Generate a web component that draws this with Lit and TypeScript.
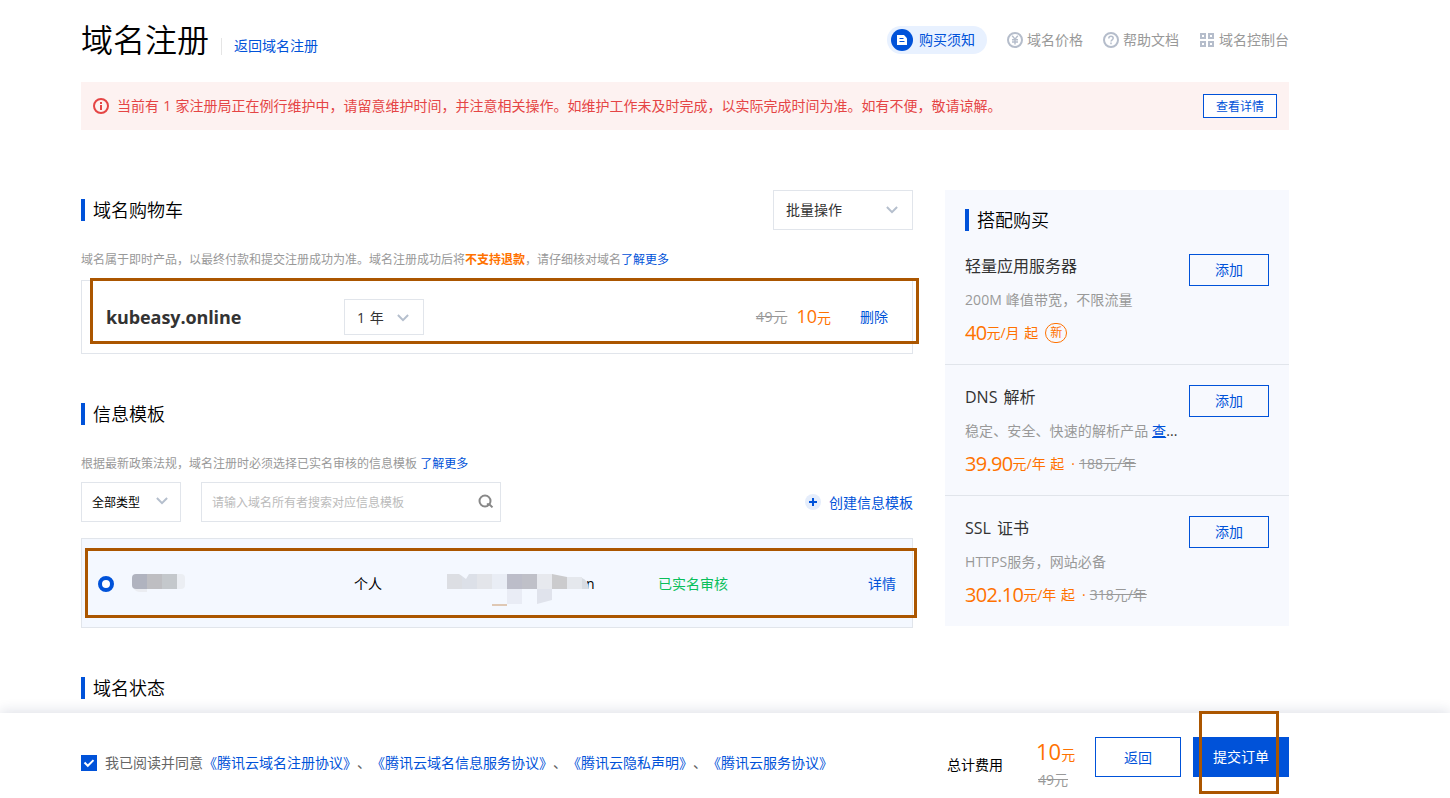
import { LitElement, html, svg, css, nothing } from "lit";
import { customElement } from "lit/decorators.js";

interface Addon {
  name: string;
  desc: string;
  more?: string;
  price: string;
  unit: string;
  badge?: string;
  old?: string;
}

const addons: Addon[] = [
  { name: "轻量应用服务器", desc: "200M 峰值带宽，不限流量", price: "40", unit: "元/月 起", badge: "新" },
  { name: "DNS 解析", desc: "稳定、安全、快速的解析产品", more: "查", price: "39.90", unit: "元/年 起", old: "188元/年" },
  { name: "SSL 证书", desc: "HTTPS服务，网站必备", price: "302.10", unit: "元/年 起", old: "318元/年" },
];

const agreements = [
  "《腾讯云域名注册协议》",
  "《腾讯云域名信息服务协议》",
  "《腾讯云隐私声明》",
  "《腾讯云服务协议》",
];

const chevron = html`<svg class="chev" width="12" height="8" viewBox="0 0 12 8">
  <path d="M.9 1 6 6.1 11.1 1" fill="none" stroke="#b5bfcd" stroke-width="2" />
</svg>`;

const noticeIcon = html`<svg width="22" height="22" viewBox="0 0 22 22">
  <circle cx="11" cy="11" r="11" fill="#0052d9" />
  <path d="M6 6h7l3 3.200V16H6Z" fill="#fff" />
  <path d="M8.500 9.500h4M8.500 12.500h5" stroke="#0052d9" stroke-width="1.200" />
</svg>`;

const yenIcon = html`<svg width="16" height="16" viewBox="0 0 16 16" fill="none" stroke="#b5bdcb">
  <circle cx="8" cy="8" r="7" stroke-width="2" />
  <path d="M5.200 3.800 8 7.200l2.800-3.400M8 7v5.400M5 7.700h6M5 10h6" stroke-width="1.400" />
</svg>`;

const helpIcon = html`<svg width="16" height="16" viewBox="0 0 16 16" fill="none" stroke="#b5bdcb">
  <circle cx="8" cy="8" r="7" stroke-width="2" />
  <path d="M5.800 6.500C5.800 5 6.700 4.300 8 4.300s2.200.8 2.200 2c0 1.400-2.200 1.600-2.200 3.200M8 10.600v1.700" stroke-width="1.500" />
</svg>`;

const gridIcon = html`<svg width="16" height="16" viewBox="0 0 16 16" fill="none" stroke="#b5bdcb" stroke-width="2">
  <path d="M2 2h4v4H2ZM10 2h4v4h-4ZM2 10h4v4H2ZM10 10h4v4h-4Z" />
</svg>`;

const infoIcon = html`<svg width="16" height="16" viewBox="0 0 16 16">
  <circle cx="8" cy="8" r="7" fill="none" stroke="#e54545" stroke-width="2" />
  <path d="M7 4h2v2H7ZM7 7h2v5H7Z" fill="#e54545" />
</svg>`;

const searchIcon = html`<svg width="16" height="16" viewBox="0 0 16 16" fill="none" stroke="#888" stroke-width="2">
  <circle cx="7" cy="7" r="5.500" />
  <path d="M8.800 10.200h2.500l3.200 3.200" />
</svg>`;

const plusIcon = html`<svg width="16" height="16" viewBox="0 0 16 16">
  <circle cx="8" cy="8" r="8" fill="#e5edfb" />
  <path d="M8 4v8M4 8h8" stroke="#0052d9" stroke-width="2" />
</svg>`;

const radioIcon = html`<svg width="16" height="16" viewBox="0 0 16 16">
  <circle cx="8" cy="8" r="6" fill="#fff" stroke="#0052d9" stroke-width="4" />
</svg>`;

const checkIcon = html`<svg width="16" height="16" viewBox="0 0 16 16">
  <path d="M0 0h16v16H0Z" fill="#0052d9" />
  <path d="m3.500 7.500 3.300 3.300 5.700-5.700" fill="none" stroke="#fff" stroke-width="2" />
</svg>`;

/* Pixelated cells that hide the owner name and the mail address. */
const nameCells = html`<svg width="53" height="20" viewBox="0 0 53 20">
  <path d="M4 0h11v15H4a4 4 0 0 1-4-4V4a4 4 0 0 1 4-4Z" fill="#b0b3bf" />
  <path d="M15 0h15v15H15Z" fill="#bebec2" />
  <path d="M30 0h15v15H30Z" fill="#c4c8cc" />
  <path d="M45 0h4a4 4 0 0 1 4 4v7a4 4 0 0 1-4 4h-4Z" fill="#ebeef3" />
  <path d="M2 15h13v3H8q-4 0-6-3Z" fill="#ebedf2" />
</svg>`;

const cell = (d: string, fill: string) => svg`<path d=${d} fill=${fill} />`;
const mailCells = html`<svg width="142" height="32" viewBox="0 0 142 32">
  ${cell("M0 0h12l3 2v13H0Z", "#dcdee3")}
  ${cell("M15 2l4 3 3-5h8v15H15Z", "#dce0e8")}
  ${cell("M30 0h15v15H30Z", "#e3e5ea")}
  ${cell("M45 0h15v15H45Z", "#e9edf5")}
  ${cell("M60 0h15v15H60Z", "#bcbdc9")}
  ${cell("M75 0h15v15H75Z", "#bfc0c8")}
  ${cell("M90 0h15v15H90Z", "#e7e9ee")}
  ${cell("M105 0l15 3v12h-15Z", "#cbcbcd")}
  ${cell("M120 3h15v12h-15Z", "#e5e8ed")}
  ${cell("M135 4q6 2 7 11h-7Z", "#d8dce2")}
  ${cell("M60 15h15v15H60Z", "#e9ecf5")}
  ${cell("M90 15h15v11l-15 4Z", "#e0e3ec")}
  ${cell("M45 30h15v2H45Z", "#dfc8b4")}
</svg>`;

@customElement("app-root")
export class AppRoot extends LitElement {
  static styles = css`
    :host {
      display: flex;
      flex-direction: column;
      height: 798px;
      overflow: hidden;
      background: #fff;
      color: #000;
      font: 390 14px/20px "Open Sans", "Noto Sans CJK SC", sans-serif;
      text-spacing-trim: space-all;
      white-space: nowrap;
    }
    * { box-sizing: border-box; }
    svg { display: block; flex: none; }
    .link { color: #0052d9; }
    .orange { color: #ff7200; }
    .strike { color: #999; text-decoration: line-through; }

    main { flex: 1; min-height: 0; overflow: hidden; width: 1208px; margin-left: 81px; }
    header { display: flex; height: 82px; padding-top: 20px; }
    h1 { margin: 0; font-size: 32px; line-height: 40px; font-weight: 350; }
    .back { margin: 18px 0 0 12px; height: 17px; border-left: 1px solid #e5e5e5; padding-left: 12px; line-height: 16px; }
    nav { margin-left: auto; display: flex; align-items: center; gap: 20px; height: 40px; color: #999; }
    .nav { display: flex; align-items: center; gap: 4px; line-height: 20px; }
    .pill { gap: 6px; height: 28px; padding: 0 12px 0 4px; border-radius: 14px; background: #e8f1ff; color: #0052d9; }

    .alert { display: flex; align-items: center; height: 48px; padding: 0 12px; gap: 8px; background: #fdf2f1; color: #e54545; }
    .alert span { word-spacing: 0.6px; }
    .detail { margin-left: auto; width: 74px; height: 24px; border: 1px solid #0052d9; background: #fff; color: #0052d9; font-size: 12px; line-height: 23px; text-align: center; }

    .columns { display: flex; gap: 32px; margin-top: 60px; align-items: flex-start; }
    .left { width: 832px; }
    .title { display: flex; align-items: center; gap: 8px; font-size: 18px; line-height: 24px; font-weight: 350; }
    .title::before { content: ""; width: 4px; height: 22px; background: #0052d9; }
    .bar { display: flex; justify-content: space-between; align-items: center; height: 40px; }
    .select { display: flex; justify-content: space-between; align-items: center; border: 1px solid #e1e5eb; background: #fff; color: #333; }
    .batch { width: 140px; height: 40px; padding: 0 14px 0 12px; }
    .tip { font-size: 12px; line-height: 18px; color: #999; }
    .tip b { color: #ff7200; }
    .first .tip { margin-top: 21px; }

    .card { position: relative; display: flex; align-items: center; border: 1px solid #e1e5eb; }
    .mark { position: absolute; border: 3px solid #ab5600; z-index: 2; }
    .cart { height: 74px; margin-top: 11px; padding: 0 24px; }
    .cart .mark { left: 8px; top: -3px; width: 829px; height: 66px; }
    .domain { width: 238px; color: #333; font: 700 18px/24px "Open Sans", sans-serif; letter-spacing: -0.1px; }
    .years { width: 80px; height: 36px; padding: 1px 14px 0 12px; word-spacing: 1px; }
    .price { margin-left: auto; display: flex; align-items: center; }
    .price .strike { letter-spacing: 0.5px; }
    .big { font-size: 18px; }
    .now { margin-left: 9px; }
    .del { margin-left: 29px; }

    .second { margin-top: 48px; }
    .second .tip { margin-top: 29px; }
    .filters { display: flex; align-items: center; height: 40px; margin-top: 9px; }
    .type { width: 100px; height: 40px; padding: 1px 12px 0 10px; font-size: 12px; color: #000; }
    .type .chev { margin-top: -4px; }
    .search { display: flex; justify-content: space-between; align-items: center; width: 300px; height: 40px; margin-left: 20px; padding: 1px 6px 0 10px; border: 1px solid #e1e5eb; color: #bbb; font-size: 12px; }
    .search svg { margin-top: -1px; }
    .create { margin-left: auto; display: flex; align-items: center; gap: 8px; padding-top: 1px; }
    .create svg { margin-top: -1px; }
    .template { height: 90px; margin-top: 16px; padding: 2px 16px 0; background: #f4f8ff; }
    .template .mark { left: 3px; top: 9px; width: 832px; height: 70px; }
    .owner { width: 222px; margin-left: 18px; }
    .kind { width: 93px; }
    .mail { display: flex; width: 211px; height: 20px; }
    .tail { margin-left: -3px; }
    .cells { position: relative; z-index: 1; height: 20px; }
    .ok { color: #0abf5b; }
    .more { margin-left: auto; }
    .third { margin-top: 48px; }

    aside { width: 344px; height: 436px; background: #f7f9fe; }
    aside > .title { padding: 18px 20px 2px; }
    .addon { display: flex; justify-content: space-between; height: 131px; padding: 20px 20px 0; border-bottom: 1px solid #e1e5eb; }
    .addon:last-child { height: 130px; border: 0; }
    .name { font-size: 16px; line-height: 24px; color: #333; word-spacing: 2px; }
    .desc { margin-top: 12px; line-height: 20px; color: #999; letter-spacing: 0.1px; }
    .desc .link { text-decoration: underline; }
    .rest { color: #333; }
    .cost { display: flex; align-items: center; margin-top: 11px; height: 24px; line-height: 24px; color: #ff7200; }
    .num { font-size: 20px; letter-spacing: -0.7px; }
    .unit { word-spacing: 1px; }
    .new { margin-left: 7px; width: 22px; height: 20px; border: 1px solid #ff7200; border-radius: 11px; font-size: 12px; line-height: 18px; text-align: center; }
    .dot { margin: 0 4px 0 7px; }
    .add { width: 80px; height: 32px; border: 1px solid #0052d9; color: #0052d9; line-height: 30px; text-align: center; }

    footer { flex: none; position: relative; height: 85px; padding: 0 161px 0 81px; display: flex; align-items: flex-start; background: #fff; box-shadow: 0 -2px 12px rgba(30, 45, 90, 0.14); }
    .agree { display: flex; align-items: center; gap: 8px; height: 20px; margin-top: 40px; color: #666; }
    .total { margin: 42px 0 0 auto; width: 89px; }
    .sum { width: 59px; margin-top: 26px; }
    .sum .pay { height: 24px; line-height: 24px; }
    .sum .was { margin: 7px 0 0 2px; height: 20px; }
    .sum .n { font-size: 22px; line-height: 24px; }
    .btn { height: 40px; margin-top: 24px; text-align: center; line-height: 40px; }
    .ghost { width: 86px; border: 1px solid #0052d9; color: #0052d9; }
    .primary { width: 96px; margin-left: 12px; background: #0052d9; color: #fff; }
    footer .mark { left: 1199px; top: -2px; width: 80px; height: 83px; }
  `;

  private addon(a: Addon) {
    return html`<div class="addon">
      <div>
        <div class="name">${a.name}</div>
        <div class="desc">${a.desc}${a.more ? html` <span class="link">${a.more}</span><span class="rest">...</span>` : nothing}</div>
        <div class="cost">
          <span class="num">${a.price}</span><span class="unit">${a.unit}</span>
          ${a.badge ? html`<span class="new">${a.badge}</span>` : nothing}
          ${a.old ? html`<span class="dot">·</span><span class="strike">${a.old}</span>` : nothing}
        </div>
      </div>
      <div class="add">添加</div>
    </div>`;
  }

  render() {
    return html`
      <main>
        <header>
          <h1>域名注册</h1>
          <div class="back link">返回域名注册</div>
          <nav>
            <div class="nav pill">${noticeIcon}购买须知</div>
            <div class="nav">${yenIcon}域名价格</div>
            <div class="nav">${helpIcon}帮助文档</div>
            <div class="nav">${gridIcon}域名控制台</div>
          </nav>
        </header>
        <div class="alert">
          ${infoIcon}
          <span>当前有 1 家注册局正在例行维护中，请留意维护时间，并注意相关操作。如维护工作未及时完成，以实际完成时间为准。如有不便，敬请谅解。</span>
          <div class="detail">查看详情</div>
        </div>
        <div class="columns">
          <div class="left">
            <section class="first">
              <div class="bar">
                <div class="title">域名购物车</div>
                <div class="select batch"><span>批量操作</span>${chevron}</div>
              </div>
              <div class="tip">域名属于即时产品，以最终付款和提交注册成功为准。域名注册成功后将<b>不支持退款</b>，请仔细核对域名<span class="link">了解更多</span></div>
              <div class="card cart">
                <div class="domain">kubeasy.online</div>
                <div class="select years"><span>1 年</span>${chevron}</div>
                <div class="price">
                  <span class="strike">49元</span>
                  <span class="orange now"><span class="big">10</span>元</span>
                  <span class="link del">删除</span>
                </div>
                <div class="mark"></div>
              </div>
            </section>
            <section class="second">
              <div class="title">信息模板</div>
              <div class="tip">根据最新政策法规，域名注册时必须选择已实名审核的信息模板 <span class="link">了解更多</span></div>
              <div class="filters">
                <div class="select type"><span>全部类型</span>${chevron}</div>
                <div class="search"><span>请输入域名所有者搜索对应信息模板</span>${searchIcon}</div>
                <div class="create link">${plusIcon}创建信息模板</div>
              </div>
              <div class="card template">
                ${radioIcon}
                <div class="owner">${nameCells}</div>
                <div class="kind">个人</div>
                <div class="mail"><div class="cells">${mailCells}</div><span class="tail">n</span></div>
                <div class="ok">已实名审核</div>
                <div class="link more">详情</div>
                <div class="mark"></div>
              </div>
            </section>
            <section class="third"><div class="title">域名状态</div></section>
          </div>
          <aside>
            <div class="title">搭配购买</div>
            ${addons.map((a) => this.addon(a))}
          </aside>
        </div>
      </main>
      <footer>
        <div class="agree">
          ${checkIcon}
          <span>我已阅读并同意${agreements.map((a, i) => html`${i ? "、" : nothing}<span class="link">${a}</span>`)}</span>
        </div>
        <div class="total">总计费用</div>
        <div class="sum">
          <div class="pay orange"><span class="n">10</span>元</div>
          <div class="was strike">49元</div>
        </div>
        <div class="btn ghost">返回</div>
        <div class="btn primary">提交订单</div>
        <div class="mark"></div>
      </footer>
    `;
  }
}
